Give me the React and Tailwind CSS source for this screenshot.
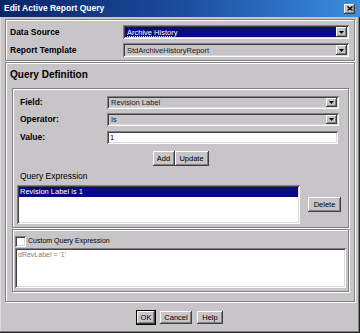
import React from "react";

const sunken =
  "shadow-[inset_1px_1px_#808080,inset_-1px_-1px_#ffffff,inset_2px_2px_#404040,inset_-2px_-2px_#dcdadc]";
const raised =
  "shadow-[inset_-1px_-1px_#404040,inset_1px_1px_#ffffff,inset_-2px_-2px_#808080]";
const etched = "border border-[#808080] shadow-[inset_1px_1px_#ffffff,1px_1px_#ffffff]";

function DropArrow() {
  return (
    <div className={`flex h-full w-[11px] shrink-0 items-center justify-center bg-[#c8c5c8] ${raised}`}>
      <svg width="5" height="3" viewBox="0 0 5 3">
        <path d="M0 0h5L2.5 3z" fill="#000" />
      </svg>
    </div>
  );
}

function Select({ value, width, height, selected }) {
  return (
    <div
      className={`flex shrink-0 items-stretch bg-[#c8c5c8] p-[2px] text-[7.5px] ${sunken}`}
      style={{ width, height }}
    >
      <div className={`flex flex-1 items-center ${selected ? "bg-[#0a0a80]" : ""}`}>
        <span
          className={
            selected
              ? "px-[2px] leading-[9px] text-white underline decoration-dotted"
              : "px-[2px] leading-[9px] text-[#202020]"
          }
        >
          {value}
        </span>
      </div>
      <DropArrow />
    </div>
  );
}

function Button({ children, w, h = "h-[15px]", def }) {
  return (
    <div
      className={`flex shrink-0 items-center justify-center bg-[#c8c5c8] text-[7.5px] text-black ${raised} ${w} ${h} ${
        def ? "outline outline-1 outline-black" : ""
      }`}
    >
      {children}
    </div>
  );
}

export default function App() {
  return (
    <div className="h-[333px] w-[360px] overflow-hidden bg-[#c8c5c8] font-['Liberation_Sans',Arial,sans-serif] shadow-[inset_-1px_-1px_#202020,inset_-2px_-2px_#808080,inset_1px_1px_#dcdadc]">
      <div className="flex h-[17px] items-center bg-linear-to-r from-[#0a246a] via-[#1c4c9c] to-[#3c8ee0] pl-[4px] pr-[5px]">
        <span className="text-[8.5px] font-bold text-white">Edit Active Report Query</span>
        <div className={`ml-auto flex h-[10px] w-[11px] items-center justify-center bg-[#c8c5c8] ${raised}`}>
          <svg width="6" height="5" viewBox="0 0 6 5">
            <path d="M0.5 0.5L5.5 4.5M5.5 0.5L0.5 4.5" stroke="#000" strokeWidth="1.3" />
          </svg>
        </div>
      </div>

      <div className={`mx-[5px] mt-[2px] flex h-[42px] flex-col gap-[4px] pl-[4px] pt-[5px] ${etched}`}>
        <div className="flex h-[14px] items-center">
          <span className="w-[113px] text-[8.5px] font-bold text-black">Data Source</span>
          <Select value="Archive History" width={226} height={14} selected />
        </div>
        <div className="flex h-[14px] items-center">
          <span className="w-[113px] text-[8.5px] font-bold text-black">Report Template</span>
          <Select value="StdArchiveHistoryReport" width={226} height={14} />
        </div>
      </div>

      <div className={`mx-[5px] mt-[1px] h-[240px] pl-[4px] pt-[5px] ${etched}`}>
        <div className="text-[10px] font-bold leading-[14px] text-black">Query Definition</div>

        <div className={`ml-[2px] mt-[6px] h-[140px] w-[337px] ${etched} text-[7.5px]`}>
          <div className="mt-[7px] flex h-[13px] items-center pl-[7px]">
            <span className="w-[87px] text-[8.5px] font-bold">Field:</span>
            <Select value="Revision Label" width={232} height={13} />
          </div>
          <div className="mt-[4px] flex h-[13px] items-center pl-[7px]">
            <span className="w-[87px] text-[8.5px] font-bold">Operator:</span>
            <Select value="Is" width={232} height={13} />
          </div>
          <div className="mt-[5px] flex h-[13px] items-center pl-[7px]">
            <span className="w-[87px] text-[8.5px] font-bold">Value:</span>
            <div className={`flex h-[13px] w-[231px] items-center bg-white px-[3px] leading-[9px] ${sunken}`}>1</div>
          </div>
          <div className="mt-[7px] flex justify-center">
            <Button w="w-[22px]">Add</Button>
            <Button w="w-[34px]">Update</Button>
          </div>
          <div className="mt-[5px] pl-[7px] text-[8.5px] leading-[11px]">Query Expression</div>
          <div className="mt-[3px] flex items-start pl-[4px]">
            <div className={`h-[39px] w-[283px] bg-white p-[2px] ${sunken}`}>
              <div className="bg-[#0a0a80] pl-[1px] leading-[10px] text-white">Revision Label is 1</div>
            </div>
            <div className="ml-[8px] mt-[12px]">
              <Button w="w-[33px]">Delete</Button>
            </div>
          </div>
        </div>

        <div className={`ml-[2px] mt-[1px] h-[63px] w-[337px] pl-[2px] pt-[6px] ${etched}`}>
          <div className="flex h-[11px] items-center">
            <div className={`h-[11px] w-[11px] bg-white ${sunken}`} />
            <span className="ml-[2px] text-[7px] text-black">Custom Query Expression</span>
          </div>
          <div className={`mt-[1px] h-[40px] w-[331px] bg-white px-[3px] py-[3px] text-[7px] leading-[8px] text-[#808080] ${sunken}`}>
            dRevLabel = '1'
          </div>
        </div>
      </div>

      <div className="mt-[9px] flex justify-center gap-[5px]">
        <Button w="w-[18px]" h="h-[13px]" def>
          OK
        </Button>
        <Button w="w-[32px]" h="h-[13px]">
          Cancel
        </Button>
        <Button w="w-[26px]" h="h-[13px]">
          Help
        </Button>
      </div>
    </div>
  );
}
